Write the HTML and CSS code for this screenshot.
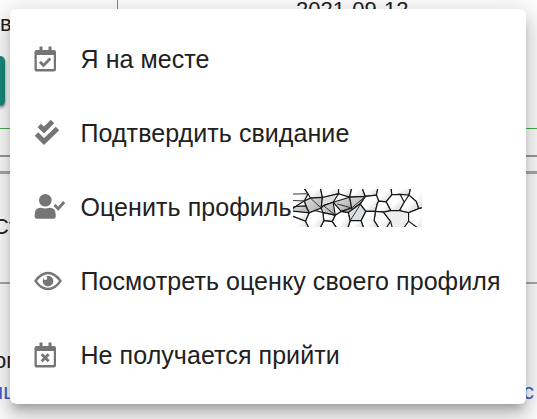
FILE: index.html
```html
<!DOCTYPE html>
<html lang="ru">
<head>
<meta charset="utf-8">
<title>Свидание</title>
<link rel="stylesheet" href="styles.css">
</head>
<body>
<div class="page">
  <header class="summary">
    <div class="summary-left"><span>в</span><div class="button"></div></div>
    <div class="summary-date">2021-09-12</div>
  </header>
  <div class="divider"></div>
  <section class="panel">Ст</section>
  <section class="details">
    <div>ог</div>
    <div class="links"><span>нц</span><span>с</span></div>
  </section>
</div>
<ul class="menu">
  <li class="item">
    <svg class="icon" viewBox="0 0 34 34"><path d="M2.500 8V6q0-2 2-2h3V.5h3V4h6V.5h3V4H22q2 0 2 2v17.500q0 2-2 2H4.500q-2 0-2-2zm2.300 1v13.500q0 .5.500.5h16q.5 0 .5-.5V9z" fill-rule="evenodd"/><path class="mark" d="M8 15.700l3.500 3.700 6.800-7"/></svg>
    <span>Я на месте</span>
  </li>
  <li class="item">
    <svg class="icon" viewBox="0 0 34 34"><path class="double" d="M7.300 5.500l4.700 4.500 8.500-8.500M4.500 14l7.500 7.500 13.500-13"/></svg>
    <span>Подтвердить свидание</span>
  </li>
  <li class="item">
    <svg class="icon" viewBox="0 0 34 34"><circle cx="13.300" cy="6.300" r="6.300"/><path d="M2.700 22.700v-2.500q0-6.500 6-6.500c3 1 6 1 9 0q6 0 6 6.500v2.500q0 2-2 2h-17q-2 0-2-2z"/><path class="mark" d="M22.500 11l3.700 3.700 6-6.700"/></svg>
    <span>Оценить профиль</span>
    <svg class="mosaic" viewBox="40 28 385 112" preserveAspectRatio="none">
      <defs>
        <linearGradient id="cell" x1="0" y1="0" x2="1" y2="1"><stop offset=".5" stop-color="#fff"/><stop offset="1" stop-color="#ccc"/></linearGradient>
        <linearGradient id="dark" x1="0" y1="0" x2="1" y2="1"><stop offset="0" stop-color="#e2e2e2"/><stop offset="1" stop-color="#aaa"/></linearGradient>
      </defs>
      <g class="light">
        <path d="M30 15H74V27L85 42 74 63 49 79 30 86z"/>
        <path d="M74 15H122V27L128 53 92 55 85 42 74 27z"/>
        <path d="M122 15H176V42L128 53 122 27z"/>
        <path d="M176 15H215V27L209 52 176 42z"/>
        <path d="M215 15H247V27L256 50 209 52 215 27z"/>
        <path d="M247 15H293V27L289 46 256 50 247 27z"/>
        <path d="M293 15H333V27L335 45 318 66 296 64 289 46 293 27z"/>
        <path d="M333 15H390V30L386 46 360 44 335 45 333 27z"/>
        <path d="M390 15H440V80L415 86 408 65 386 46 390 30z"/>
        <path d="M256 50L289 46 296 64 292 70 286 94 257 94 240 72z"/>
        <path d="M335 45L360 44 372 67 358 92 332 92 318 66z"/>
        <path d="M296 64L318 66 332 92 310 96 286 94 292 70z"/>
        <path d="M386 46L408 65 415 86 385 98 358 92 372 67z"/>
        <path d="M286 94L310 96 331 123 320 141V155H295V141L282 121z"/>
        <path class="soft" d="M332 92L358 92 385 98 385 123 372 141V155H336V141L331 123 310 96z"/>
        <path d="M415 86L440 80V155H410V141L385 123 385 98z"/>
        <path d="M257 94L286 94 282 121 295 141V155H250V141L243 121z"/>
        <path d="M205 97L243 121 250 141V155H204V141L211 121z"/>
        <path d="M166 105L184 94 205 97 211 121 204 141V155H169V141L157 124z"/>
        <path d="M129 97L166 105 157 124 132 121z"/>
        <path d="M132 121L157 124 169 141V155H122V141z"/>
        <path d="M88 98L104 91 129 97 132 121 122 141V155H86V141L77 123z"/>
        <path d="M30 90L88 98 77 123 30 105z"/>
        <path d="M30 105L77 123 86 141V155H30z"/>
      </g>
      <g class="shade">
        <path d="M74 63L92 55 128 53 124 84 88 98 78 78z"/>
        <path d="M39 86L49 79 78 78 88 98 39 93z"/>
        <path class="pale" d="M128 53L176 42 160 67 131 77 124 84z"/>
        <path d="M131 77L160 67 166 105 129 97 124 84z"/>
        <path d="M160 67L209 52 215 84 184 94z"/>
        <path d="M209 52L256 50 240 72 205 97 184 94 215 84z"/>
        <path class="pale" d="M205 97L240 72 257 94 243 121 211 121z"/>
      </g>
      <path class="edge" d="M39 43L85 42M39 62L74 63 88 98M92 55L124 84M131 77L166 105M172 72L215 84 256 50M211 121L256 50"/>
    </svg>
  </li>
  <li class="item">
    <svg class="icon" viewBox="0 0 34 34"><path class="outline" d="M3.500 13Q9 5 16 5t12.500 8Q23 21 16 21T3.500 13z"/><circle cx="16" cy="13" r="5.300"/><circle class="glint" cx="13.300" cy="10" r="2"/></svg>
    <span>Посмотреть оценку своего профиля</span>
  </li>
  <li class="item">
    <svg class="icon" viewBox="0 0 34 34"><path d="M2.500 8V6q0-2 2-2h3V.5h3V4h6V.5h3V4H22q2 0 2 2v17.500q0 2-2 2H4.500q-2 0-2-2zm2.300 1v13.500q0 .5.500.5h16q.5 0 .5-.5V9z" fill-rule="evenodd"/><path class="mark" d="M9.700 12.300l7 7m0-7l-7 7"/></svg>
    <span>Не получается прийти</span>
  </li>
</ul>
</body>
</html>
```
FILE: styles.css
```css
* { box-sizing: border-box; }
body { margin: 0; height: 419px; overflow: hidden; position: relative; background: #fff; color: #212121; font-family: "Liberation Sans", Arial, sans-serif; }
.page { height: 419px; overflow: hidden; font-size: 22px; line-height: 26px; }
.summary { display: flex; height: 129px; border-bottom: 1px solid #4caf50; }
.summary-left { width: 118px; padding-top: 11px; border-right: 1px solid #4caf50; }
.button { width: 5px; height: 50px; margin-top: 19px; background: #15897b; border-radius: 0 6px 6px 0; box-shadow: 0 2px 3px #777; }
.summary-date { margin: -3px 0 0 178px; }
.divider { height: 28px; border-bottom: 2px solid #999; }
.panel { height: 113px; margin-top: 14px; padding: 40px 0 0; text-indent: -7px; border-top: 3px solid #aaa; border-bottom: 2px solid #aaa; }
.details { padding-top: 64px; text-indent: -6px; }
.links { display: flex; justify-content: space-between; margin-top: 5px; padding-right: 3px; color: #4a5bd0; text-indent: -9px; }
.links span:last-child { text-indent: 0; }
.menu { position: absolute; left: 10px; top: 9px; width: 516px; height: 395px; margin: 0; padding: 13px 0 11px; list-style: none; background: #fff; border-radius: 6px; box-shadow: 0 8px 8px -4px rgba(0,0,0,.2), 0 12px 18px 2px rgba(0,0,0,.14), 0 4px 26px 6px rgba(0,0,0,.12); }
.item { display: flex; align-items: center; height: 74.200px; padding-left: 22px; font-size: 25px; letter-spacing: .07px; white-space: nowrap; }
.icon { flex: none; width: 34px; height: 34px; margin: 7px 14.500px 0 0; fill: #757575; }
.mark { fill: none; stroke: #757575; stroke-width: 2.800; }
.double { fill: none; stroke: #757575; stroke-width: 4.900; }
.outline { fill: none; stroke: #757575; stroke-width: 2.300; }
.glint { fill: #fff; }
.mosaic { width: 129px; height: 38px; margin-left: 1px; margin-top: 2px; }
.light, .shade { stroke: #161616; stroke-width: 3.500; }
.light { fill: url(#cell); }
.soft { fill: #eee; }
.shade { fill: url(#dark); }
.pale { fill: #dcdfe2; }
.edge { fill: none; stroke: #292929; stroke-width: 2.800; }
```
